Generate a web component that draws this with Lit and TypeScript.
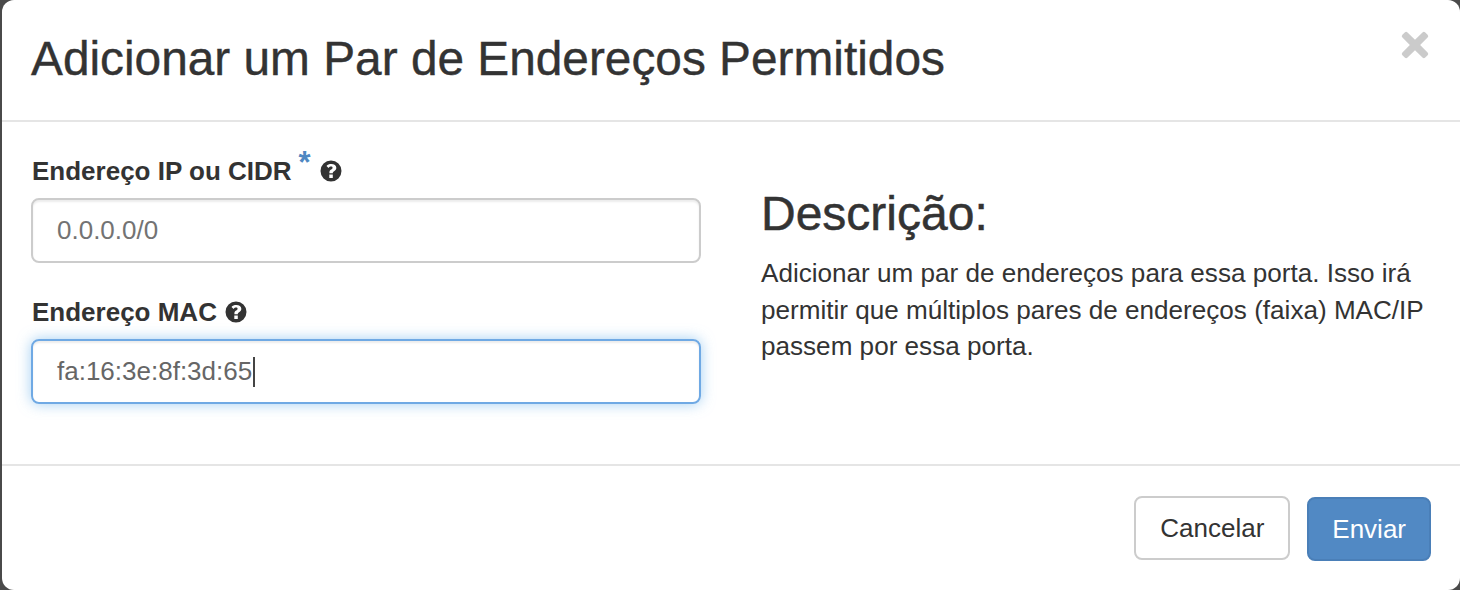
import { LitElement, html, css } from "lit";
import { customElement } from "lit/decorators.js";

const help = html`<svg class="help" viewBox="0 0 24 24" aria-hidden="true">
  <path fill-rule="evenodd" d="M12 1.5a10.5 10.5 0 1 0 0 21a10.5 10.5 0 0 0 0-21ZM13.8 19h-3.5v-3.4h3.5ZM16.9 10.6c-.4.8-1.2 1.4-2.1 2c-.7.4-1 .8-1 1.7h-3.4v-.7c0-1.4.5-2.2 1.7-3c.9-.6 1.5-1 1.5-1.8c0-.7-.6-1.2-1.5-1.2c-1 0-1.8.5-2.5 1.4L7.5 6.9C8.6 5.6 10.200 5 12.300 5c3 0 5 1.500 5 3.700c0 .7-.1 1.300-.4 1.900Z"/>
</svg>`;

@customElement("app-root")
export class AppRoot extends LitElement {
  static styles = css`
    :host {
      display: block;
      width: 1460px;
      height: 590px;
      background: #4a4a4a;
      font-family: "Liberation Sans", Arial, sans-serif;
      color: #333;
      overflow: hidden;
    }
    .modal {
      box-sizing: border-box;
      height: 590px;
      margin-left: 2px;
      background: #fff;
      border-radius: 12px;
      display: flex;
      flex-direction: column;
    }
    .header {
      box-sizing: border-box;
      height: 122px;
      flex: none;
      border-bottom: 2px solid #e5e5e5;
      padding: 0 29px;
      display: flex;
      justify-content: space-between;
    }
    h4 {
      margin: 34px 0 0;
      font-size: 47.8px;
      line-height: 50px;
      font-weight: 400;
      -webkit-text-stroke: 0.4px #333;
    }
    .close {
      margin: 31px 2px 0 0;
      width: 28px;
      height: 28px;
      color: #cbcbcb;
    }
    .close svg { display: block; width: 28px; height: 28px; fill: currentColor; }
    .body {
      box-sizing: border-box;
      height: 342px;
      flex: none;
      padding: 0 29px;
      display: flex;
      gap: 60px;
    }
    .form {
      width: 670px;
      flex: none;
      padding-top: 32px;
      display: flex;
      flex-direction: column;
      gap: 32px;
    }
    .group { display: flex; flex-direction: column; gap: 10px; }
    label {
      display: flex;
      align-items: center;
      height: 34px;
      font-size: 26px;
      font-weight: 700;
      line-height: 34px;
      padding-left: 1px;
    }
    .req {
      color: #4f88c2;
      font-size: 31px;
      align-self: flex-start;
      margin: -8px 0 0 7px;
      line-height: 34px;
    }
    .help { width: 24px; height: 24px; fill: #333; margin-left: 7px; }
    .req + .help { margin-left: 8px; }
    .field {
      box-sizing: border-box;
      height: 65px;
      border: 2px solid #ccc;
      border-radius: 8px;
      padding: 0 24px;
      display: flex;
      align-items: center;
      font-size: 26px;
      color: #737373;
      box-shadow: inset 0 2px 2px rgba(0, 0, 0, 0.075);
    }
    .field.focus {
      border-color: #6fa9e4;
      color: #666;
      box-shadow: inset 0 2px 2px rgba(0, 0, 0, 0.075), 0 0 14px rgba(102, 175, 233, 0.6);
    }
    .caret {
      display: inline-block;
      width: 2px;
      height: 30px;
      background: #444;
      margin-left: 1px;
    }
    .desc { flex: 1; padding-top: 66px; }
    h3 {
      margin: 0;
      font-size: 48px;
      line-height: 52px;
      font-weight: 400;
      -webkit-text-stroke: 0.5px #333;
    }
    p {
      margin: 15px 0 0;
      font-size: 26.1px;
      line-height: 36.5px;
    }
    .footer {
      flex: 1;
      border-top: 2px solid #e5e5e5;
      padding: 30px 29px 0;
      display: flex;
      justify-content: flex-end;
      align-items: flex-start;
      gap: 17px;
    }
    .btn {
      box-sizing: border-box;
      height: 64px;
      border-radius: 8px;
      border: 2px solid #ccc;
      background: #fff;
      color: #333;
      font: 400 26px "Liberation Sans", Arial, sans-serif;
      padding: 0 24px;
    }
    .btn.primary {
      background: #5189c4;
      border-color: #4a7fb8;
      color: #fff;
      margin-top: 1px;
      padding: 0 23px;
    }
  `;

  render() {
    return html`
      <div class="modal">
        <div class="header">
          <h4>Adicionar um Par de Endereços Permitidos</h4>
          <div class="close">
            <svg viewBox="0 0 30 30" aria-hidden="true">
              <path d="M7 1.500L15 9.500L23 1.500Q24.500 0 26 1.500L28.500 4Q30 5.500 28.500 7L20.500 15L28.500 23Q30 24.500 28.500 26L26 28.500Q24.500 30 23 28.500L15 20.500L7 28.500Q5.500 30 4 28.500L1.500 26Q0 24.500 1.500 23L9.500 15L1.500 7Q0 5.500 1.500 4L4 1.500Q5.500 0 7 1.500Z"/>
            </svg>
          </div>
        </div>
        <div class="body">
          <div class="form">
            <div class="group">
              <label>Endereço IP ou CIDR<span class="req">*</span>${help}</label>
              <div class="field">0.0.0.0/0</div>
            </div>
            <div class="group">
              <label>Endereço MAC${help}</label>
              <div class="field focus">fa:16:3e:8f:3d:65<span class="caret"></span></div>
            </div>
          </div>
          <div class="desc">
            <h3>Descrição:</h3>
            <p>Adicionar um par de endereços para essa porta. Isso irá permitir que múltiplos pares de endereços (faixa) MAC/IP passem por essa porta.</p>
          </div>
        </div>
        <div class="footer">
          <button class="btn">Cancelar</button>
          <button class="btn primary">Enviar</button>
        </div>
      </div>
    `;
  }
}
